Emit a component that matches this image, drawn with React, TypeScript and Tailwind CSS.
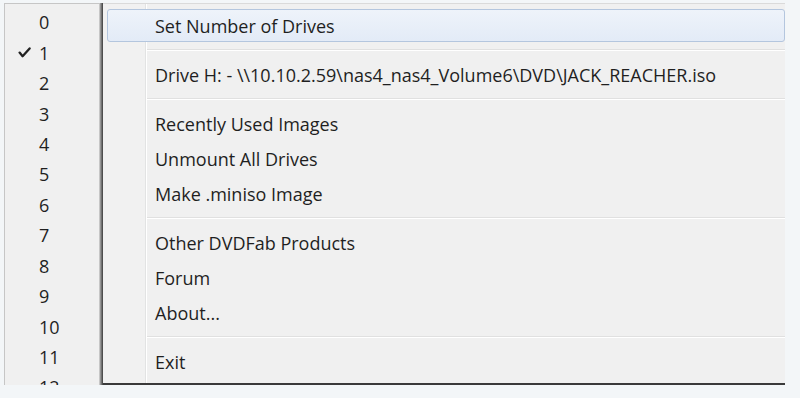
import React from "react";

// ── Data ────────────────────────────────────────────────────────────
const DRIVE_COUNTS = Array.from({ length: 13 }, (_, i) => i);
const CHECKED = 1;

type MenuEntry =
  | { kind: "item"; label: string; active?: boolean }
  | { kind: "sep" };

const MENU: MenuEntry[] = [
  { kind: "item", label: "Set Number of Drives", active: true },
  { kind: "sep" },
  { kind: "item", label: "Drive H: - \\\\10.10.2.59\\nas4_nas4_Volume6\\DVD\\JACK_REACHER.iso" },
  { kind: "sep" },
  { kind: "item", label: "Recently Used Images" },
  { kind: "item", label: "Unmount All Drives" },
  { kind: "item", label: "Make .miniso Image" },
  { kind: "sep" },
  { kind: "item", label: "Other DVDFab Products" },
  { kind: "item", label: "Forum" },
  { kind: "item", label: "About..." },
  { kind: "sep" },
  { kind: "item", label: "Exit" },
];

// ── Check glyph ─────────────────────────────────────────────────────
const Check: React.FC = () => (
  <svg width="13" height="11" viewBox="0 0 13 11" className="shrink-0">
    <path
      d="M1.6 5.6 L4.6 9.2 L11.6 1.4"
      fill="none"
      stroke="#222"
      strokeWidth="2.3"
      strokeLinecap="round"
      strokeLinejoin="round"
    />
  </svg>
);

// ── Submenu (drive count) ───────────────────────────────────────────
const DriveSubmenu: React.FC = () => (
  <div className="w-[96px] h-[382px] shrink-0 overflow-hidden bg-[#f0f0f0] border-l border-t border-r border-[#c6c6c6] pt-[3px]">
    {DRIVE_COUNTS.map((n) => (
      <div key={n} className="h-[30.45px] flex items-center pl-[13px]">
        <div className="w-[13px] flex items-center">{n === CHECKED && <Check />}</div>
        <span className="ml-[8px] leading-none">{n}</span>
      </div>
    ))}
  </div>
);

// ── Main tray menu ──────────────────────────────────────────────────
const TrayMenu: React.FC = () => (
  <div className="w-[682px] h-[382px] shrink-0 flex flex-col pt-[4px] border-t border-[#dadada] border-b-2 border-b-[#3a3a3a] bg-[linear-gradient(to_right,#f1f1f1_42px,#e2e3e3_42px,#e2e3e3_43px,#ffffff_43px,#ffffff_44px,#f0f0f0_44px)]">
    {MENU.map((m, i) =>
      m.kind === "sep" ? (
        <div key={i} className="h-[14px] flex flex-col justify-center pl-[44px]">
          <div className="h-px bg-[#e0e0e0]" />
          <div className="h-px bg-white" />
        </div>
      ) : m.active ? (
        <div
          key={i}
          className="h-[33px] my-[1px] ml-[4px] flex items-center pl-[47px] rounded-[3px] border border-[#b4c6de] bg-[linear-gradient(#eef3fa,#e3ebf7)]"
        >
          <span className="leading-none whitespace-nowrap">{m.label}</span>
        </div>
      ) : (
        <div key={i} className="h-[35px] flex items-center pl-[52px]">
          <span className="leading-none whitespace-nowrap">{m.label}</span>
        </div>
      )
    )}
  </div>
);

export default function App() {
  return (
    <div className="w-[800px] h-[398px] overflow-hidden bg-[#f3f6f8] text-[18px] text-[#1f1f1f] font-['Open_Sans',sans-serif]">
      <div className="flex pt-[3px] pl-[4px]">
        <DriveSubmenu />
        <div className="w-[3px] h-[382px] shrink-0 bg-[linear-gradient(to_right,#a8a8a8,#3c3c3c)]" />
        <TrayMenu />
      </div>
    </div>
  );
}
